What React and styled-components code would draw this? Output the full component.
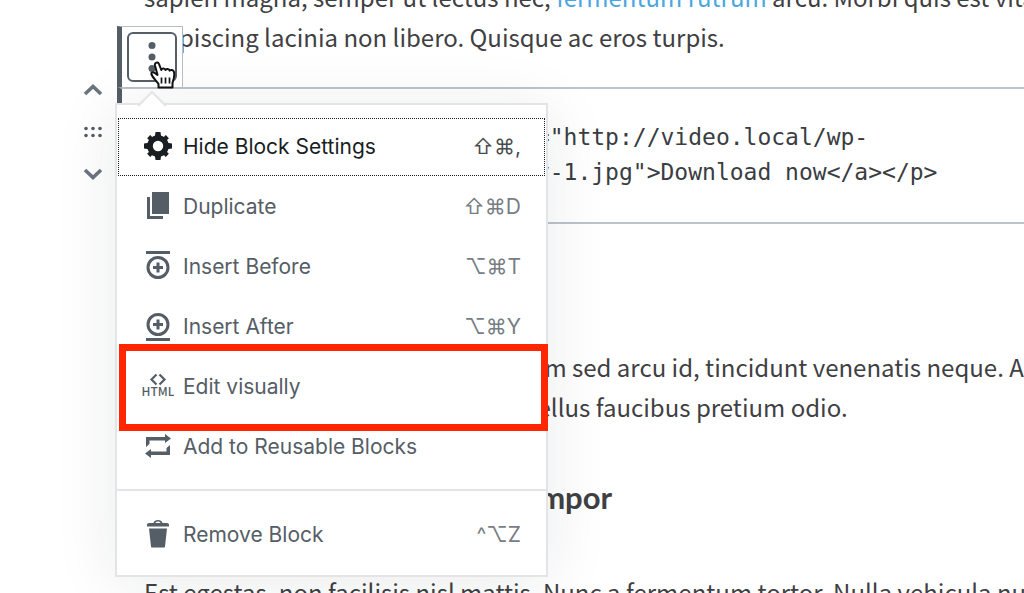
import React, { useState } from 'react';
import styled, { createGlobalStyle, css } from 'styled-components';

const GlobalStyle = createGlobalStyle`
  * {
    box-sizing: border-box;
  }

  body {
    margin: 0;
    background-color: #fff;
    color: #3f4043;
    overflow: hidden;
  }
`;

const Page = styled.main`
  min-height: 100vh;
  overflow: hidden;
`;

// the editor is scrolled a little way down, so the first line is cut
const Article = styled.article`
  margin-top: -23px;
  font-family: "Noto Sans CJK JP", "Noto Sans", sans-serif;
  font-size: 24px;
  line-height: 40px;
`;

const Paragraph = styled.p`
  margin: 0;
  padding-left: 144px;
  white-space: nowrap;
`;

const TextLink = styled.a`
  color: #4ba6df;
  text-decoration: none;
`;

const Heading = styled.h3`
  margin: 50px 0 55px;
  padding-left: 144px;
  font-family: Lato, sans-serif;
  font-size: 31px;
  font-weight: 700;
  line-height: 40px;
  white-space: nowrap;
`;

const Block = styled.section`
  position: relative;
  margin: 30px 0 123px 117px;
`;

const HtmlEditor = styled.textarea`
  display: block;
  width: 100%;
  height: 137px;
  padding: 31px 0 31px 40px;
  border: 2px solid #bcc3ca;
  border-left: 5px solid #555d66;
  border-right: none;
  border-radius: 0;
  outline: none;
  resize: none;
  overflow: hidden;
  white-space: pre;
  background-color: transparent;
  color: #3a3d42;
  font-family: "DejaVu Sans Mono", monospace;
  font-size: 23px;
  line-height: 35px;
`;

const Toolbar = styled.div`
  position: absolute;
  left: 0;
  bottom: 100%;
  display: flex;
  margin-bottom: -1px;
  padding: 5px;
  border: 1px solid #b5bcc6;
  border-left: 5px solid #555d66;
  background-color: #fff;
`;

const MoreButton = styled.button`
  display: flex;
  width: 50px;
  height: 50px;
  align-items: center;
  justify-content: center;
  padding: 0;
  border: 2px solid #555d66;
  border-radius: 6px;
  background-color: #fff;
`;

const Mover = styled.div`
  position: absolute;
  top: -18px;
  right: 100%;
  display: flex;
  flex-direction: column;
  margin-right: 8px;
`;

const MoverButton = styled.button`
  display: flex;
  width: 32px;
  height: 42px;
  align-items: center;
  justify-content: center;
  padding: 0;
  border: none;
  background: none;
`;

const Menu = styled.div`
  position: absolute;
  top: 16px;
  left: -2px;
  width: 433px;
  border: 2px solid #e2e4e7;
  background-color: #fff;
  box-shadow: 0 6px 60px rgba(25, 30, 35, 0.09);
  font-family: Inter, "DejaVu Sans", sans-serif;
`;

const MenuArrow = styled.svg`
  position: absolute;
  left: 21px;
  bottom: 100%;
  display: block;
  margin-bottom: -2px;
`;

const MenuGroup = styled.div`
  padding: 12px 0;

  & + & {
    padding: 14px 0 10px;
    border-top: 2px solid #e2e4e7;
  }
`;

const MenuItem = styled.button`
  position: relative;
  display: flex;
  width: 100%;
  height: 60px;
  align-items: center;
  gap: 9px;
  padding: 0 25px;
  border: none;
  background: none;
  color: #555d66;
  font-family: inherit;
  font-size: 21px;
  line-height: 28px;
  text-align: left;

  ${(props) => props.$active && css`
    color: #191e23;
    outline: 1px dotted #191e23;
    outline-offset: -2px;
  `}
`;

const ItemIcon = styled.span`
  display: flex;
  width: 32px;
  justify-content: center;
  padding-bottom: 2px;
`;

const ItemLabel = styled.span`
  flex: 1;
`;

const Shortcut = styled.span`
  opacity: 0.8;
`;

const Highlight = styled.span`
  position: absolute;
  inset: -13px -2px -14px 2px;
  border: 7px solid #ff2600;
  pointer-events: none;
`;

const Cursor = styled.svg`
  position: absolute;
  top: 34px;
  left: 28px;
`;

const HTML = `<p><a class="download" href="http://video.local/wp-
content/uploads/2018/12/gray-1.jpg">Download now</a></p>`;

const GearIcon = () => (
  <svg width="28" height="28" viewBox="0 0 28 28" fill="currentColor">
    <circle cx="14" cy="14" r="8" fill="none" stroke="currentColor" strokeWidth="5.6" />
    {[0, 90, 180, 270].map((angle) => (
      <g key={angle} transform={`rotate(${angle} 14 14)`}>
        <path d="M11.500 0h5l.7 5h-6.400z" />
        <path d="M11.800 .8h4.400v4h-4.400z" transform="rotate(45 14 14)" />
      </g>
    ))}
  </svg>
);

const DuplicateIcon = () => (
  <svg width="24" height="28" viewBox="0 0 24 28" fill="currentColor">
    <path d="M6 0h17v22H6zM1 5h3v19h13v3H1z" />
  </svg>
);

const InsertIcon = ({ after }) => (
  <svg width="24" height="30" viewBox="0 0 24 30" fill="none" stroke="currentColor" strokeWidth="3">
    <g transform={after ? 'matrix(1 0 0 -1 0 30)' : undefined}>
      <path d="M0 1.500h24" />
      <circle cx="12" cy="16.500" r="10" />
      <path d="M12 11.500v10M7 16.500h10" />
    </g>
  </svg>
);

const HtmlIcon = () => (
  <svg width="32" height="26" viewBox="0 0 32 26" fill="none" stroke="currentColor">
    <path d="M14.500 1.500l-5 5 5 5M17.500 1.500l5 5-5 5" strokeWidth="2.200" />
    <text
      x="16"
      y="23"
      fill="currentColor"
      stroke="none"
      textAnchor="middle"
      fontFamily="'Noto Sans CJK JP', sans-serif"
      fontSize="12"
      fontWeight="500"
    >
      HTML
    </text>
  </svg>
);

const ReusableIcon = () => (
  <svg width="26" height="24" viewBox="0 0 26 24" fill="currentColor">
    <path d="M1 13V3h19V0l6 4.500-6 4.500V6.500H4.500V10zM25 11v10H6v3l-6-4.500L6 15v2.500h15.500V14z" />
  </svg>
);

const TrashIcon = () => (
  <svg width="24" height="28" viewBox="0 0 24 28" fill="currentColor">
    <path d="M7.500 3c.5-4 8.500-4 9 0H21c1 0 2 .8 2 2v1.500H1V5c0-1.200 1-2 2-2zm2 0h5c-.5-2-4.500-2-5 0zM3 8.500h18l-2 18c0 .6-.5 1-1 1H6c-.5 0-1-.4-1-1z" />
  </svg>
);

const Chevron = ({ down }) => (
  <svg width="20" height="14" viewBox="0 0 20 14" fill="none" stroke="#6c7480" strokeWidth="3.600">
    <path d={down ? 'M2 3l8 7.500 8-7.500' : 'M2 11l8-7.500 8 7.500'} />
  </svg>
);

const DragDots = () => (
  <svg width="18" height="12" viewBox="0 0 18 12" fill="#555d66">
    {[2, 9, 16].map((x) => (
      <React.Fragment key={x}>
        <circle cx={x} cy="2.500" r="1.800" />
        <circle cx={x} cy="9.500" r="1.800" />
      </React.Fragment>
    ))}
  </svg>
);

const App = () => {
  const [html, setHtml] = useState(HTML);
  const onHtmlChange = (e) => {
    setHtml(e.target.value);
  };

  return (
    <Page>
      <GlobalStyle />
      <Article>
        <Paragraph>
          sapien magna, semper ut lectus nec, <TextLink href="#rutrum">fermentum rutrum</TextLink> arcu. Morbi quis est vitae
          <br />
          adipiscing lacinia non libero. Quisque ac eros turpis.
        </Paragraph>

        <Block>
          <HtmlEditor
            aria-label="HTML"
            spellCheck={false}
            value={html}
            onChange={onHtmlChange}
          />
          <Mover>
            <MoverButton aria-label="Move up"><Chevron /></MoverButton>
            <MoverButton aria-label="Drag block"><DragDots /></MoverButton>
            <MoverButton aria-label="Move down"><Chevron down /></MoverButton>
          </Mover>
          <Menu>
            <MenuArrow width="28" height="17" viewBox="0 0 28 17">
              <path d="M0 16L14 2l14 14v1H0z" fill="#fff" />
              <path d="M0 16L14 2l14 14" fill="none" stroke="#e2e4e7" strokeWidth="2" />
            </MenuArrow>
            <MenuGroup>
              <MenuItem $active>
                <ItemIcon><GearIcon /></ItemIcon>
                <ItemLabel>Hide Block Settings</ItemLabel>
                <Shortcut>⇧⌘,</Shortcut>
              </MenuItem>
              <MenuItem>
                <ItemIcon><DuplicateIcon /></ItemIcon>
                <ItemLabel>Duplicate</ItemLabel>
                <Shortcut>⇧⌘D</Shortcut>
              </MenuItem>
              <MenuItem>
                <ItemIcon><InsertIcon /></ItemIcon>
                <ItemLabel>Insert Before</ItemLabel>
                <Shortcut>⌥⌘T</Shortcut>
              </MenuItem>
              <MenuItem>
                <ItemIcon><InsertIcon after /></ItemIcon>
                <ItemLabel>Insert After</ItemLabel>
                <Shortcut>⌥⌘Y</Shortcut>
              </MenuItem>
              <MenuItem>
                <ItemIcon><HtmlIcon /></ItemIcon>
                <ItemLabel>Edit visually</ItemLabel>
                <Highlight />
              </MenuItem>
              <MenuItem>
                <ItemIcon><ReusableIcon /></ItemIcon>
                <ItemLabel>Add to Reusable Blocks</ItemLabel>
              </MenuItem>
            </MenuGroup>
            <MenuGroup>
              <MenuItem>
                <ItemIcon><TrashIcon /></ItemIcon>
                <ItemLabel>Remove Block</ItemLabel>
                <Shortcut>^⌥Z</Shortcut>
              </MenuItem>
            </MenuGroup>
          </Menu>
          <Toolbar>
            <MoreButton aria-label="More options">
              <svg width="8" height="32" viewBox="0 0 8 32" fill="#555d66">
                <circle cx="4" cy="4.500" r="3.500" />
                <circle cx="4" cy="16" r="3.500" />
                <circle cx="4" cy="27.500" r="3.500" />
              </svg>
            </MoreButton>
            <Cursor width="28" height="30" viewBox="0 0 28 30">
              <path
                d="M7.500 14L5 4.500C4.300 1.500 8 .3 9 3l2.300 6c.5-2.200 3.800-2 4.200 0 .8-1.600 3.600-1.300 4.200.6 1-1.200 3.800-.8 4.300 1.400 1 4-.5 8-1.500 11v4.500H8.500V23C6 19.500 3 17 1.500 13.500.8 11.500 3 10.500 4.700 12z"
                fill="#fff"
                stroke="#111"
                strokeWidth="2"
                strokeLinejoin="round"
              />
              <path d="M11.500 16.500v6M15.500 16.500v6M19.500 16.500v6" stroke="#111" strokeWidth="1.700" />
            </Cursor>
          </Toolbar>
        </Block>

        <Paragraph>
          Vivamus sed lorem ac nisi, vestibulum sed arcu id, tincidunt venenatis neque. Aliquam
          <br />
          erat volutpat mauris, dictum nulla tellus faucibus pretium odio.
        </Paragraph>
        <Heading>Vestibulum ante enim non tempor</Heading>
        <Paragraph>
          Est egestas, non facilisis nisl mattis. Nunc a fermentum tortor. Nulla vehicula nunc
        </Paragraph>
      </Article>
    </Page>
  );
};

export default App;
